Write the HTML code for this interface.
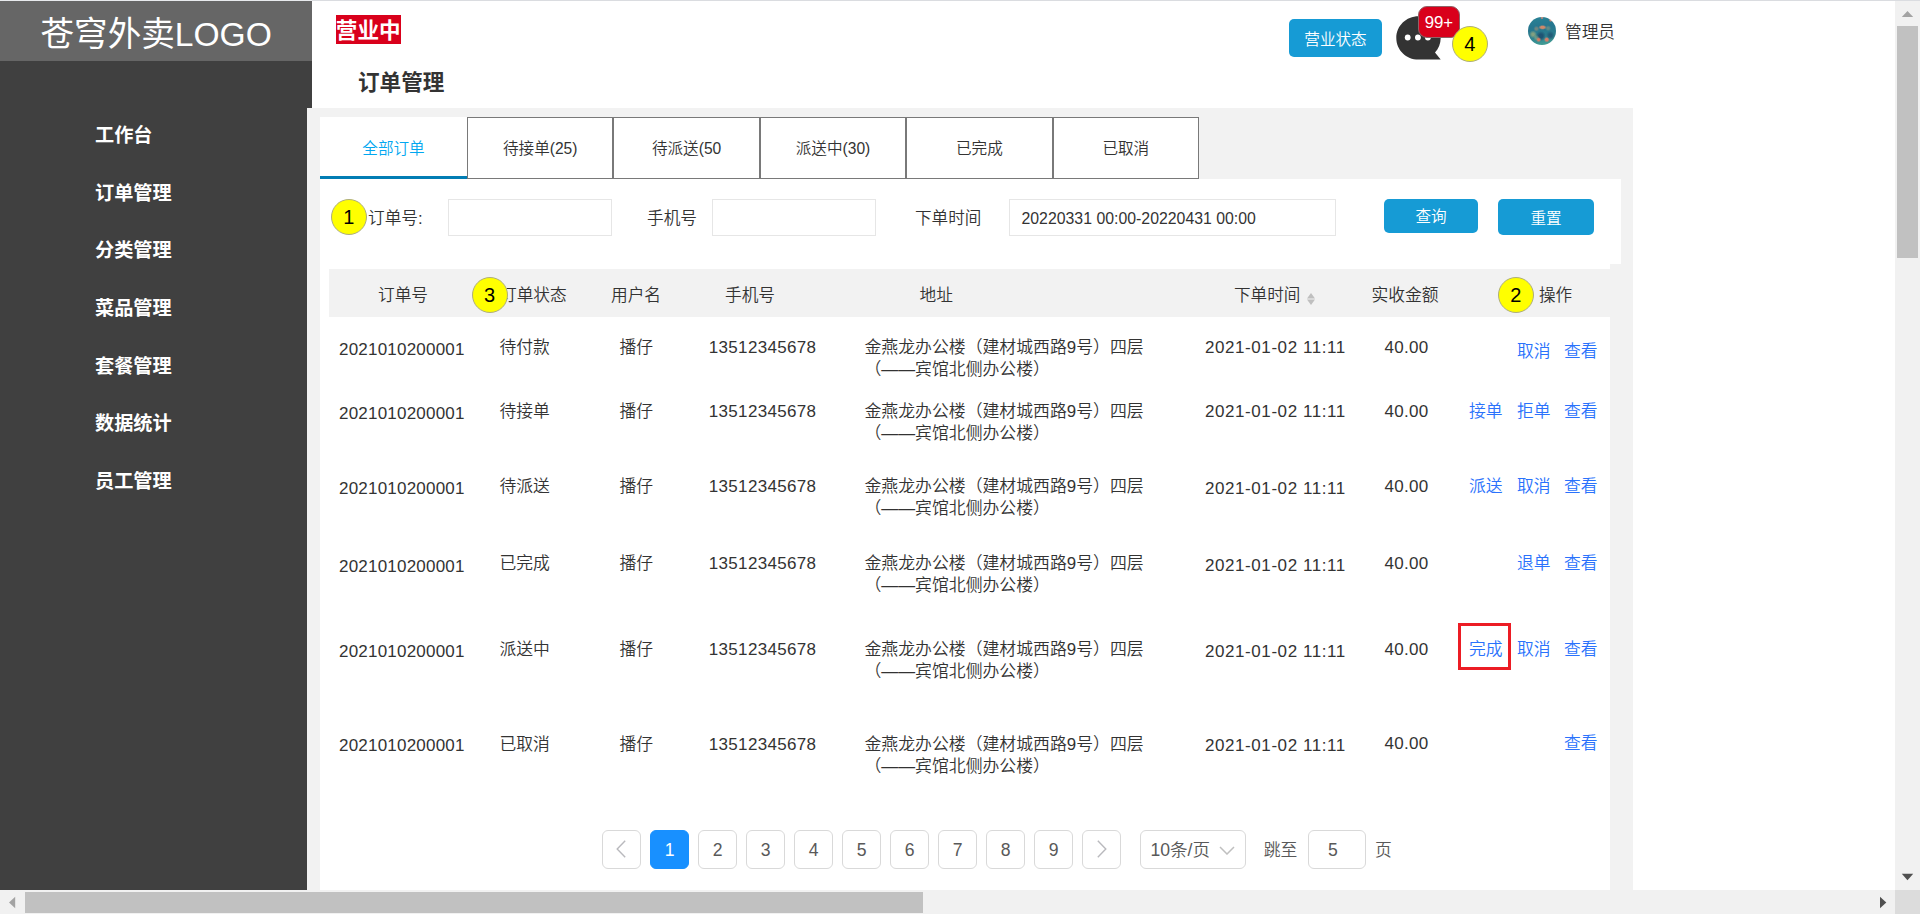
<!DOCTYPE html>
<html lang="zh-CN">
<head>
<meta charset="utf-8">
<title>订单管理</title>
<style>
html,body{margin:0;padding:0;}
body{width:1920px;height:914px;overflow:hidden;background:#fff;position:relative;font-family:"Liberation Sans","Noto Sans CJK SC",sans-serif;font-weight:350;}
aside,header,main,nav,section{display:block;margin:0;padding:0;}
body div,body svg{position:absolute;white-space:nowrap;}
.yc{width:36px;height:36px;box-sizing:border-box;border:1px solid #adad7e;border-radius:50%;background:#ffff00;color:#000;font-size:20px;line-height:35.500px;text-align:center;}
.pb{width:38.4px;height:38.4px;box-sizing:border-box;border:1px solid #d9d9d9;border-radius:6px;background:#fff;color:#595959;font-size:17.6px;line-height:39px;text-align:center;}
.avatar{border-radius:50%;background:
 radial-gradient(ellipse 4.2px 2.400px at 52% 37%, rgba(217,138,104,.95) 0 45%, transparent 100%),
 radial-gradient(circle at 38% 81%, rgba(222,122,98,.95) 0 1px, transparent 2.600px),
 radial-gradient(circle at 67% 81%, rgba(224,123,102,.95) 0 1.200px, transparent 2.800px),
 radial-gradient(circle at 81% 11%, rgba(224,138,120,.9) 0 0.700px, transparent 2px),
 radial-gradient(circle at 50% 3%, rgba(217,138,120,.9) 0 0.500px, transparent 1.700px),
 radial-gradient(circle at 30% 42%, rgba(200,150,110,.45) 0 1px, transparent 3px),
 radial-gradient(circle at 72% 40%, rgba(200,170,120,.35) 0 1px, transparent 3px),
 radial-gradient(circle at 18% 62%, rgba(190,185,120,.6) 0 1.200px, transparent 4px),
 radial-gradient(circle at 30% 74%, rgba(190,185,120,.4) 0 1px, transparent 3px),
 radial-gradient(circle at 46% 68%, rgba(29,79,112,.9) 0 2px, transparent 5px),
 radial-gradient(circle at 80% 66%, rgba(31,86,116,.85) 0 1.500px, transparent 4.500px),
 linear-gradient(170deg,#2a8496 0%,#26768f 35%,#2a7c8e 62%,#49a596 100%);}
</style>
</head>
<body>
<aside>
<div style="left:0px;top:1px;width:312px;height:60px;background:#666666;"></div>
<div style="left:0px;top:61px;width:312px;height:47px;background:#404040;"></div>
<div style="left:0px;top:108px;width:307px;height:782px;background:#404040;"></div>
<div style="left:40.5px;top:12.50px;font-size:33.6px;line-height:44px;color:#fff;font-weight:400;">苍穹外卖LOGO</div>
<div style="left:95px;top:122.90px;font-size:19.2px;line-height:26px;color:#fff;font-weight:bold;">工作台</div>
<div style="left:95px;top:180.60px;font-size:19.2px;line-height:26px;color:#fff;font-weight:bold;">订单管理</div>
<div style="left:95px;top:238.30px;font-size:19.2px;line-height:26px;color:#fff;font-weight:bold;">分类管理</div>
<div style="left:95px;top:296.00px;font-size:19.2px;line-height:26px;color:#fff;font-weight:bold;">菜品管理</div>
<div style="left:95px;top:353.70px;font-size:19.2px;line-height:26px;color:#fff;font-weight:bold;">套餐管理</div>
<div style="left:95px;top:411.40px;font-size:19.2px;line-height:26px;color:#fff;font-weight:bold;">数据统计</div>
<div style="left:95px;top:469.10px;font-size:19.2px;line-height:26px;color:#fff;font-weight:bold;">员工管理</div>
</aside>
<header>
<div style="left:335.5px;top:15px;width:65.5px;height:29px;background:#d9001b;color:#fff;font-weight:bold;font-size:21.6px;line-height:31.500px;text-align:center;">营业中</div>
<div style="left:358px;top:68.00px;font-size:21.6px;line-height:30px;color:#333;font-weight:bold;">订单管理</div>
<div style="left:1289px;top:19px;width:93px;height:38px;background:#169bd5;border-radius:5px;color:#fff;font-size:15.6px;line-height:42px;text-align:center;">营业状态</div>
<svg style="left:1394px;top:14px;" width="50" height="48" viewBox="1394 14 50 48"><path d="M1418.5 16.2c12.3 0 22.2 9.7 22.2 21.7 0 5.6-2.2 10.700-5.700 14.500l5.700 7.200h-22.200c-12.300 0-22.200-9.700-22.200-21.700s9.900-21.700 22.200-21.700z" fill="#333"/><circle cx="1407.700" cy="37.500" r="2.900" fill="#fff"/><circle cx="1417.900" cy="37.500" r="2.900" fill="#fff"/><circle cx="1427.900" cy="37.500" r="2.900" fill="#fff"/></svg>
<div style="left:1418.2px;top:6px;width:41.500px;height:32px;box-sizing:border-box;border:1px solid #8f6468;background:#d9001b;border-radius:9px;color:#fff;font-size:16.8px;line-height:32px;text-align:center;">99+</div>
<div class="yc" style="left:1451.90px;top:25.80px;">4</div>
<div class="avatar" style="left:1528px;top:17px;width:28px;height:28px;"></div>
<div style="left:1565px;top:21.40px;font-size:16.7px;line-height:24px;color:#333;">管理员</div>
</header>
<main>
<div style="left:307px;top:108px;width:1326px;height:782px;background:#f2f2f2;"></div>
<div style="left:320px;top:117px;width:879px;height:62px;background:#fff;"></div>
<div style="left:320px;top:179px;width:1301px;height:85px;background:#fff;"></div>
<div style="left:320px;top:264px;width:1290px;height:626px;background:#fff;"></div>
<nav>
<div style="left:320px;top:117px;width:147px;height:59px;line-height:59px;text-align:center;font-size:15.6px;color:#02a7f0;padding-top:2px;">全部订单</div>
<div style="left:320px;top:176px;width:147px;height:3px;background:#027db4;"></div>
<div style="left:467.0px;top:117px;width:146.4px;height:62px;line-height:62px;text-align:center;font-size:15.6px;color:#333;box-sizing:border-box;border:1px solid #797979;line-height:61px;">待接单(25)</div>
<div style="left:613.4px;top:117px;width:146.4px;height:62px;line-height:62px;text-align:center;font-size:15.6px;color:#333;box-sizing:border-box;border:1px solid #797979;line-height:61px;">待派送(50</div>
<div style="left:759.8px;top:117px;width:146.4px;height:62px;line-height:62px;text-align:center;font-size:15.6px;color:#333;box-sizing:border-box;border:1px solid #797979;line-height:61px;">派送中(30)</div>
<div style="left:906.2px;top:117px;width:146.4px;height:62px;line-height:62px;text-align:center;font-size:15.6px;color:#333;box-sizing:border-box;border:1px solid #797979;line-height:61px;">已完成</div>
<div style="left:1052.6px;top:117px;width:146.4px;height:62px;line-height:62px;text-align:center;font-size:15.6px;color:#333;box-sizing:border-box;border:1px solid #797979;line-height:61px;">已取消</div>
</nav>
<section>
<div class="yc" style="left:330.75px;top:199.00px;">1</div>
<div style="left:368px;top:207.40px;font-size:16.7px;line-height:24px;color:#333;">订单号:</div>
<div style="left:448px;top:199px;width:164px;height:37px;background:#fff;box-sizing:border-box;border:1px solid #e6e6e6;"></div>
<div style="left:647px;top:207.40px;font-size:16.7px;line-height:24px;color:#333;">手机号</div>
<div style="left:712px;top:199px;width:164px;height:37px;background:#fff;box-sizing:border-box;border:1px solid #e6e6e6;"></div>
<div style="left:915px;top:207.40px;font-size:16.6px;line-height:24px;color:#333;">下单时间</div>
<div style="left:1009px;top:199px;width:327px;height:37px;background:#fff;box-sizing:border-box;border:1px solid #e6e6e6;"></div>
<div style="left:1021.5px;top:207.00px;font-size:15.85px;line-height:24px;color:#333;">20220331 00:00-20220431 00:00</div>
<div style="left:1384px;top:199px;width:94px;height:34px;background:#169bd5;border-radius:5px;color:#fff;font-size:15.6px;line-height:36px;text-align:center;">查询</div>
<div style="left:1498px;top:199px;width:96px;height:36px;background:#169bd5;border-radius:5px;color:#fff;font-size:15.6px;line-height:40.500px;text-align:center;">重置</div>
</section>
<section>
<div style="left:329px;top:269px;width:1281px;height:48px;background:#f2f2f2;"></div>
<div style="left:378px;top:284.40px;font-size:16.7px;line-height:24px;color:#333;">订单号</div>
<div style="left:500px;top:284.40px;font-size:16.7px;line-height:24px;color:#333;">订单状态</div>
<div style="left:611px;top:284.40px;font-size:16.7px;line-height:24px;color:#333;">用户名</div>
<div style="left:725px;top:284.40px;font-size:16.7px;line-height:24px;color:#333;">手机号</div>
<div style="left:919.5px;top:284.40px;font-size:16.7px;line-height:24px;color:#333;">地址</div>
<div style="left:1234px;top:284.40px;font-size:16.6px;line-height:24px;color:#333;">下单时间</div>
<svg style="left:1307px;top:293px;" width="8" height="12" viewBox="0 0 8 12"><path d="M4 0L8 5.400H0z" fill="#bfbfbf"/><path d="M4 12L8 6.600H0z" fill="#bfbfbf"/></svg>
<div style="left:1371.5px;top:284.40px;font-size:16.8px;line-height:24px;color:#333;">实收金额</div>
<div style="left:1539px;top:284.40px;font-size:16.6px;line-height:24px;color:#333;">操作</div>
<div class="yc" style="left:471.50px;top:277.00px;">3</div>
<div class="yc" style="left:1497.75px;top:277.00px;">2</div>
<div style="left:339px;top:337.50px;font-size:17px;line-height:24px;color:#333;letter-spacing:0.21px;">2021010200001</div>
<div style="left:499.5px;top:336.40px;font-size:16.8px;line-height:24px;color:#333;">待付款</div>
<div style="left:619.5px;top:336.40px;font-size:16.8px;line-height:24px;color:#333;">播仔</div>
<div style="left:708.75px;top:336.00px;font-size:17px;line-height:24px;color:#333;letter-spacing:0.33px;">13512345678</div>
<div style="left:864.5px;top:337.40px;font-size:16.87px;line-height:22px;color:#333;">金燕龙办公楼（建材城西路9号）四层</div>
<div style="left:864.5px;top:359.40px;font-size:16.87px;line-height:22px;color:#333;">（——宾馆北侧办公楼）</div>
<div style="left:1205px;top:335.50px;font-size:17px;line-height:24px;color:#333;letter-spacing:0.57px;">2021-01-02 11:11</div>
<div style="left:1384.5px;top:335.50px;font-size:17px;line-height:24px;color:#333;letter-spacing:0.3px;">40.00</div>
<div style="left:1517px;top:339.90px;font-size:16.8px;line-height:24px;color:#2a72fc;">取消</div>
<div style="left:1564px;top:339.90px;font-size:16.8px;line-height:24px;color:#2a72fc;">查看</div>
<div style="left:339px;top:402.25px;font-size:17px;line-height:24px;color:#333;letter-spacing:0.21px;">2021010200001</div>
<div style="left:499.5px;top:400.40px;font-size:16.8px;line-height:24px;color:#333;">待接单</div>
<div style="left:619.5px;top:400.40px;font-size:16.8px;line-height:24px;color:#333;">播仔</div>
<div style="left:708.75px;top:400.00px;font-size:17px;line-height:24px;color:#333;letter-spacing:0.33px;">13512345678</div>
<div style="left:864.5px;top:401.40px;font-size:16.87px;line-height:22px;color:#333;">金燕龙办公楼（建材城西路9号）四层</div>
<div style="left:864.5px;top:423.40px;font-size:16.87px;line-height:22px;color:#333;">（——宾馆北侧办公楼）</div>
<div style="left:1205px;top:399.75px;font-size:17px;line-height:24px;color:#333;letter-spacing:0.57px;">2021-01-02 11:11</div>
<div style="left:1384.5px;top:399.75px;font-size:17px;line-height:24px;color:#333;letter-spacing:0.3px;">40.00</div>
<div style="left:1469px;top:400.15px;font-size:16.8px;line-height:24px;color:#2a72fc;">接单</div>
<div style="left:1517px;top:400.15px;font-size:16.8px;line-height:24px;color:#2a72fc;">拒单</div>
<div style="left:1564px;top:400.15px;font-size:16.8px;line-height:24px;color:#2a72fc;">查看</div>
<div style="left:339px;top:476.50px;font-size:17px;line-height:24px;color:#333;letter-spacing:0.21px;">2021010200001</div>
<div style="left:499.5px;top:475.40px;font-size:16.8px;line-height:24px;color:#333;">待派送</div>
<div style="left:619.5px;top:475.40px;font-size:16.8px;line-height:24px;color:#333;">播仔</div>
<div style="left:708.75px;top:475.00px;font-size:17px;line-height:24px;color:#333;letter-spacing:0.33px;">13512345678</div>
<div style="left:864.5px;top:476.40px;font-size:16.87px;line-height:22px;color:#333;">金燕龙办公楼（建材城西路9号）四层</div>
<div style="left:864.5px;top:498.40px;font-size:16.87px;line-height:22px;color:#333;">（——宾馆北侧办公楼）</div>
<div style="left:1205px;top:477.00px;font-size:17px;line-height:24px;color:#333;letter-spacing:0.57px;">2021-01-02 11:11</div>
<div style="left:1384.5px;top:475.00px;font-size:17px;line-height:24px;color:#333;letter-spacing:0.3px;">40.00</div>
<div style="left:1469px;top:474.50px;font-size:16.8px;line-height:24px;color:#2a72fc;">派送</div>
<div style="left:1517px;top:474.50px;font-size:16.8px;line-height:24px;color:#2a72fc;">取消</div>
<div style="left:1564px;top:474.50px;font-size:16.8px;line-height:24px;color:#2a72fc;">查看</div>
<div style="left:339px;top:554.50px;font-size:17px;line-height:24px;color:#333;letter-spacing:0.21px;">2021010200001</div>
<div style="left:499.5px;top:552.40px;font-size:16.8px;line-height:24px;color:#333;">已完成</div>
<div style="left:619.5px;top:552.40px;font-size:16.8px;line-height:24px;color:#333;">播仔</div>
<div style="left:708.75px;top:552.00px;font-size:17px;line-height:24px;color:#333;letter-spacing:0.33px;">13512345678</div>
<div style="left:864.5px;top:553.40px;font-size:16.87px;line-height:22px;color:#333;">金燕龙办公楼（建材城西路9号）四层</div>
<div style="left:864.5px;top:575.40px;font-size:16.87px;line-height:22px;color:#333;">（——宾馆北侧办公楼）</div>
<div style="left:1205px;top:554.00px;font-size:17px;line-height:24px;color:#333;letter-spacing:0.57px;">2021-01-02 11:11</div>
<div style="left:1384.5px;top:552.00px;font-size:17px;line-height:24px;color:#333;letter-spacing:0.3px;">40.00</div>
<div style="left:1517px;top:551.70px;font-size:16.8px;line-height:24px;color:#2a72fc;">退单</div>
<div style="left:1564px;top:551.70px;font-size:16.8px;line-height:24px;color:#2a72fc;">查看</div>
<div style="left:339px;top:639.50px;font-size:17px;line-height:24px;color:#333;letter-spacing:0.21px;">2021010200001</div>
<div style="left:499.5px;top:638.15px;font-size:16.8px;line-height:24px;color:#333;">派送中</div>
<div style="left:619.5px;top:638.15px;font-size:16.8px;line-height:24px;color:#333;">播仔</div>
<div style="left:708.75px;top:637.75px;font-size:17px;line-height:24px;color:#333;letter-spacing:0.33px;">13512345678</div>
<div style="left:864.5px;top:639.15px;font-size:16.87px;line-height:22px;color:#333;">金燕龙办公楼（建材城西路9号）四层</div>
<div style="left:864.5px;top:661.15px;font-size:16.87px;line-height:22px;color:#333;">（——宾馆北侧办公楼）</div>
<div style="left:1205px;top:639.50px;font-size:17px;line-height:24px;color:#333;letter-spacing:0.57px;">2021-01-02 11:11</div>
<div style="left:1384.5px;top:637.75px;font-size:17px;line-height:24px;color:#333;letter-spacing:0.3px;">40.00</div>
<div style="left:1469px;top:637.50px;font-size:16.8px;line-height:24px;color:#2a72fc;">完成</div>
<div style="left:1517px;top:637.50px;font-size:16.8px;line-height:24px;color:#2a72fc;">取消</div>
<div style="left:1564px;top:637.50px;font-size:16.8px;line-height:24px;color:#2a72fc;">查看</div>
<div style="left:339px;top:733.75px;font-size:17px;line-height:24px;color:#333;letter-spacing:0.21px;">2021010200001</div>
<div style="left:499.5px;top:732.90px;font-size:16.8px;line-height:24px;color:#333;">已取消</div>
<div style="left:619.5px;top:732.90px;font-size:16.8px;line-height:24px;color:#333;">播仔</div>
<div style="left:708.75px;top:732.50px;font-size:17px;line-height:24px;color:#333;letter-spacing:0.33px;">13512345678</div>
<div style="left:864.5px;top:733.90px;font-size:16.87px;line-height:22px;color:#333;">金燕龙办公楼（建材城西路9号）四层</div>
<div style="left:864.5px;top:755.90px;font-size:16.87px;line-height:22px;color:#333;">（——宾馆北侧办公楼）</div>
<div style="left:1205px;top:734.00px;font-size:17px;line-height:24px;color:#333;letter-spacing:0.57px;">2021-01-02 11:11</div>
<div style="left:1384.5px;top:732.00px;font-size:17px;line-height:24px;color:#333;letter-spacing:0.3px;">40.00</div>
<div style="left:1564px;top:731.90px;font-size:16.8px;line-height:24px;color:#2a72fc;">查看</div>
<div style="left:1458px;top:623px;width:53px;height:47px;background:transparent;box-sizing:border-box;border:3px solid #ec1c24;"></div>
</section>
<nav>
<div class="pb" style="left:602.4px;top:830.4px;"><svg width="11" height="18" viewBox="0 0 11 18" style="position:absolute;left:12.6px;top:8.6px;"><polyline points="9.2,0.8 1.2,9 9.2,17.2" fill="none" stroke="#b9b9bd" stroke-width="1.4"/></svg></div>
<div class="pb" style="left:650.4px;top:830.4px;background:#1890ff;border-color:#1890ff;color:#fff;">1</div>
<div class="pb" style="left:698.4px;top:830.4px;">2</div>
<div class="pb" style="left:746.4px;top:830.4px;">3</div>
<div class="pb" style="left:794.4px;top:830.4px;">4</div>
<div class="pb" style="left:842.4px;top:830.4px;">5</div>
<div class="pb" style="left:890.4px;top:830.4px;">6</div>
<div class="pb" style="left:938.4px;top:830.4px;">7</div>
<div class="pb" style="left:986.4px;top:830.4px;">8</div>
<div class="pb" style="left:1034.4px;top:830.4px;">9</div>
<div class="pb" style="left:1082.4px;top:830.4px;"><svg width="11" height="18" viewBox="0 0 11 18" style="position:absolute;left:12.6px;top:8.6px;"><polyline points="1.8,0.8 9.8,9 1.8,17.2" fill="none" stroke="#b9b9bd" stroke-width="1.4"/></svg></div>
<div class="pb" style="left:1140.4px;top:830.4px;width:105.4px;text-align:left;padding-left:9px;">10条/页<svg width="16" height="9" viewBox="0 0 16 9" style="position:absolute;left:78px;top:14.500px;"><polyline points="1,1 8,8 15,1" fill="none" stroke="#bfbfbf" stroke-width="1.5"/></svg></div>
<div style="left:1263.75px;top:839.00px;font-size:16.8px;line-height:24px;color:#595959;">跳至</div>
<div class="pb" style="left:1308.4px;top:830.4px;width:57.4px;text-align:left;padding-left:18.500px;">5</div>
<div style="left:1375px;top:839.00px;font-size:16.8px;line-height:24px;color:#595959;">页</div>
</nav>
</main>
<div class="sb" style="position:static;">
<div style="left:1895px;top:0px;width:25px;height:890px;background:#f1f1f1;"></div>
<div style="left:1897px;top:26px;width:21px;height:232px;background:#c1c1c1;"></div>
<svg style="left:1895px;top:0px;" width="25" height="890" viewBox="0 0 25 890"><path d="M12.500 11L18.200 17H6.800z" fill="#a3a3a3"/><path d="M12.500 880.300L18.200 873.700H6.800z" fill="#505050"/></svg>
<div style="left:0px;top:890px;width:1895px;height:24px;background:#f1f1f1;"></div>
<div style="left:25px;top:892px;width:898px;height:21px;background:#c1c1c1;"></div>
<svg style="left:0px;top:890px;" width="1895" height="24" viewBox="0 0 1895 24"><path d="M9 12.500L15.200 6.800V18.200z" fill="#a3a3a3"/><path d="M1886.300 12.500L1880 6.800V18.200z" fill="#505050"/></svg>
<div style="left:1895px;top:890px;width:25px;height:24px;background:#dcdcdc;"></div>
<div style="left:0px;top:0px;width:1920px;height:1px;background:#dadce0;"></div>
<div style="left:0px;top:0px;width:312px;height:1px;background:#e8eaed;"></div>
</div>
</body>
</html>
